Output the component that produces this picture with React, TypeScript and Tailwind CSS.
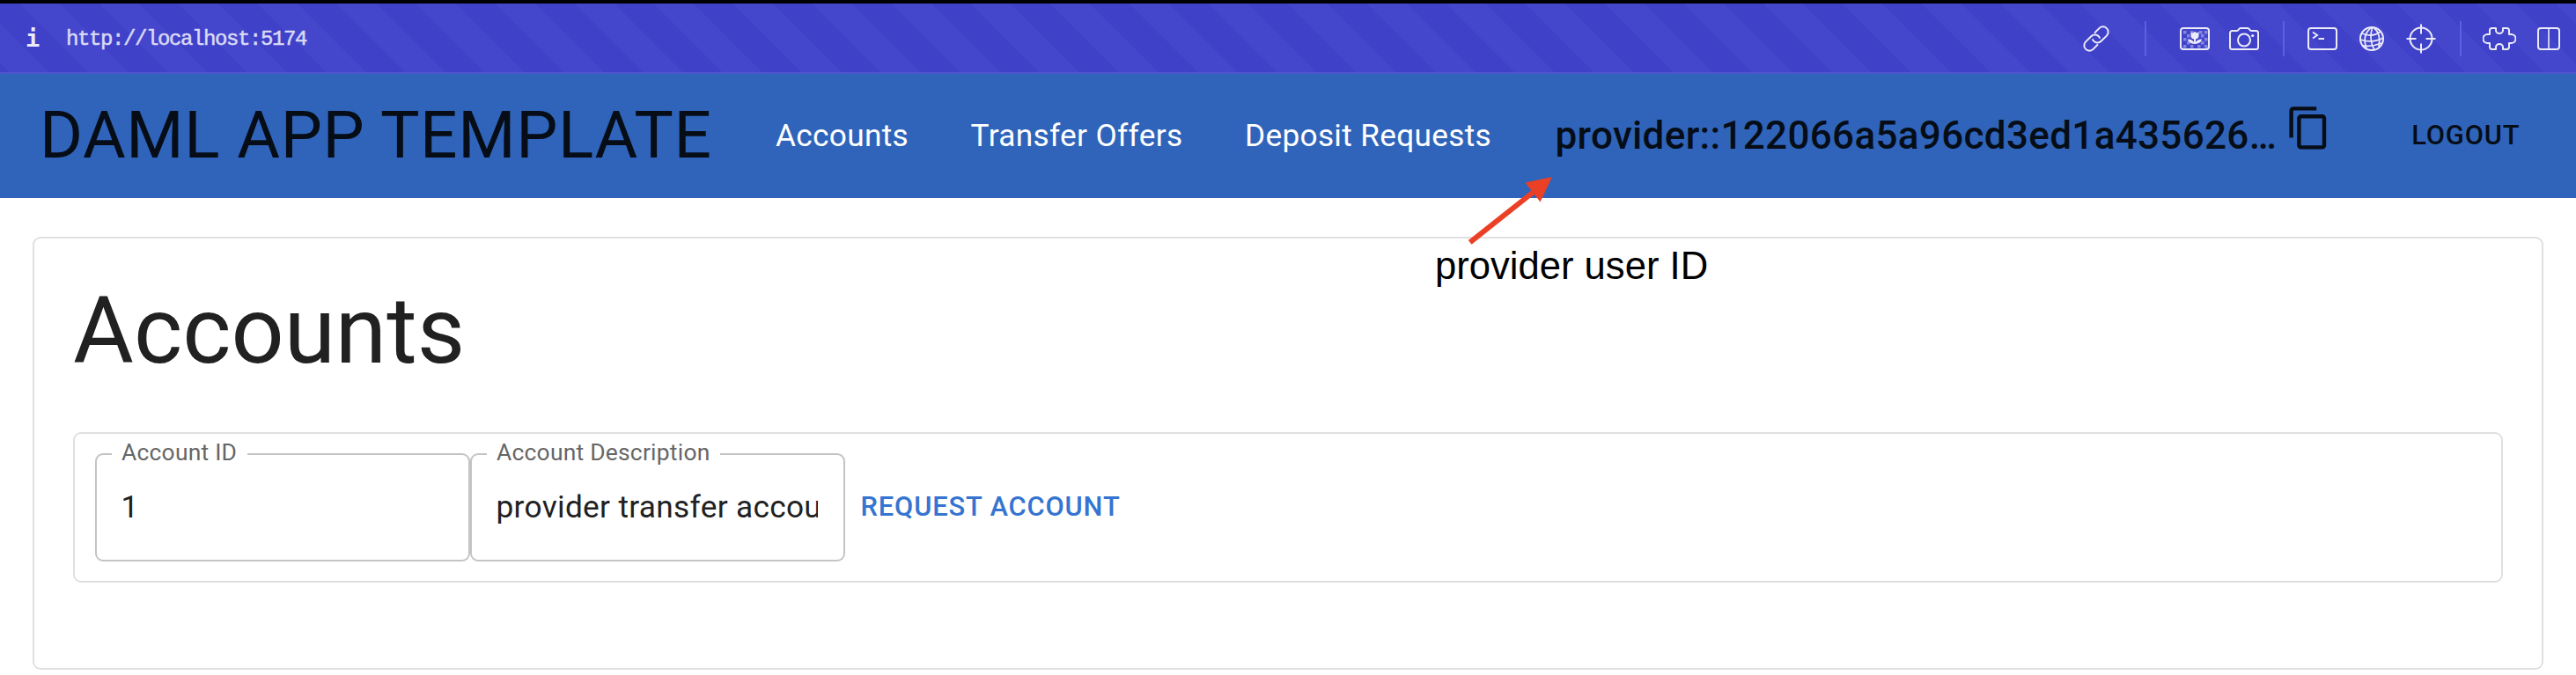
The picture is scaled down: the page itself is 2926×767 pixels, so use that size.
import React from "react";

type IconProps = { className?: string };

const strokeProps = { fill: "none", stroke: "#ebebfa", strokeWidth: 2 } as const;

function LinkIcon() {
  return (
    <svg className="h-[30px] w-[30px]" viewBox="-15 -15 30 30" {...strokeProps} strokeLinecap="round">
      <g transform="rotate(-45)">
        <path d="M-4 6H-10.800A6 6 0 0 1-10.800-6H-2A6 6 0 0 1 3.600 2" />
        <path d="M4-6H10.800A6 6 0 0 1 10.800 6H2A6 6 0 0 1-3.600-2" />
      </g>
    </svg>
  );
}

function ImageIcon() {
  const squares = [
    [4, 5], [12, 5], [22, 5], [28, 5],
    [8, 9], [24, 9],
    [4, 13], [28, 13],
    [8, 17], [24, 17],
    [4, 21], [12, 21], [20, 21], [28, 21],
  ];
  return (
    <svg className="h-[26px] w-[34px]" viewBox="0 0 34 26" {...strokeProps}>
      <g fill="#8587e0" stroke="none">
        {squares.map(([x, y]) => (
          <rect key={`${x}-${y}`} x={x} y={y - 1} width="3.500" height="3.500" />
        ))}
      </g>
      <path
        d="M12.500 5l2 1.500L17 5l2.500 1.500 2-1.500v4.500a4 4 0 0 1-3.500 4v3.500c1.200-2 3.500-3.400 7-3.400-.5 3.400-3.500 5.400-8 5.400s-7.500-2-8-5.400c3.500 0 5.800 1.400 7 3.400v-3.500a4 4 0 0 1-3.500-4z"
        fill="#ebebfa"
        stroke="#4346cb"
        strokeWidth="1"
        paintOrder="stroke"
      />
      <rect x="1" y="1" width="32" height="24" rx="3" />
    </svg>
  );
}

function CameraIcon() {
  return (
    <svg className="h-[26px] w-[34px]" viewBox="0 0 34 26" {...strokeProps}>
      <path d="M3.500 4H9c1.500 0 2-3 4-3h8c2 0 2.500 3 4 3h5.500A2.500 2.500 0 0 1 33 6.500v16a2.500 2.500 0 0 1-2.500 2.500h-27A2.500 2.500 0 0 1 1 22.500v-16A2.500 2.500 0 0 1 3.500 4z" />
      <circle cx="17" cy="14.500" r="7" />
      <circle cx="26.700" cy="9.500" r="1.600" fill="#ebebfa" stroke="none" />
    </svg>
  );
}

function TerminalIcon() {
  return (
    <svg className="h-[26px] w-[34px]" viewBox="0 0 34 26" {...strokeProps}>
      <rect x="1" y="1" width="32" height="24" rx="3" />
      <path d="M6 5.500l5 3.500-5 3.500M12.500 13h6.500" />
    </svg>
  );
}

function GlobeIcon() {
  return (
    <svg className="h-[28px] w-[28px]" viewBox="0 0 28 28" {...strokeProps}>
      <circle cx="14" cy="14" r="13" />
      <g strokeWidth="1.700">
        <path d="M14 1c-7 5-10 13-6 24M15 1c-3 7-3 17 2 26M16 1c6 5 8 12 6 22" />
        <path d="M3 8c7 3 14 3 21-2M1 15c9 3 17 3 26-2M4 22c7 1 14 0 21-3" />
      </g>
    </svg>
  );
}

function TargetIcon() {
  return (
    <svg className="h-[34px] w-[34px]" viewBox="0 0 34 34" {...strokeProps}>
      <circle cx="17" cy="17" r="12.500" />
      <path d="M17 .5v11M17 22.500v11M.5 17h11M22.500 17h11" />
    </svg>
  );
}

function PuzzleIcon() {
  return (
    <svg className="h-[28px] w-[38px]" viewBox="0 0 38 28" {...strokeProps} strokeLinejoin="round">
      <path d="M10.500 2H15v2.500a4 3.500 0 0 0 8 0V2h4.500q2.500 0 2.500 2.500V9h2.500a4.700 4.700 0 0 1 0 10H30v4q0 3-2.500 3H23v-2.500a4 3.500 0 0 0-8 0V26h-4.500Q8 26 8 23v-4H5.500a4.700 4.700 0 0 1 0-10H8V4.500Q8 2 10.500 2z" />
    </svg>
  );
}

function PanelIcon() {
  return (
    <svg className="h-[26px] w-[26px]" viewBox="0 0 26 26" {...strokeProps}>
      <rect x="1" y="1" width="24" height="24" rx="3" />
      <path d="M13 1v24" strokeWidth="1.600" />
    </svg>
  );
}

function CopyIcon({ className }: IconProps) {
  return (
    <svg className={className} viewBox="0 0 24 24" fill="#060d17">
      <path d="M16 1H4c-1.100 0-2 .9-2 2v14h2V3h12V1zm3 4H8c-1.100 0-2 .9-2 2v14c0 1.100.9 2 2 2h11c1.100 0 2-.9 2-2V7c0-1.100-.9-2-2-2zm0 16H8V7h11v14z" />
    </svg>
  );
}

function ToolbarDivider({ className = "" }: IconProps) {
  return <div className={`h-10 w-0.5 bg-[#5c5fe0] ${className}`} />;
}

function BrowserBar() {
  return (
    <header className="flex h-[84px] items-center border-t-4 border-b-2 border-t-black border-b-[#4f56cb] bg-[#3f41c8] bg-[linear-gradient(45deg,#4447cc_25%,transparent_25%,transparent_50%,#4447cc_50%,#4447cc_75%,transparent_75%)] bg-[length:90px_90px] bg-[position:23px_0px] pt-[2px] pr-[18px] font-['Liberation_Mono',monospace]">
      <span className="ml-[29px] w-[46px] font-['DejaVu_Sans_Mono',monospace] text-[27px] font-bold text-[#ebebfa]">
        i
      </span>
      <span className="pt-[2px] text-[24px] tracking-[-1.4px] text-[#d9d9f5] [-webkit-text-stroke:0.5px_#d9d9f5]">
        http://localhost:5174
      </span>
      <div className="ml-auto flex items-center">
        <LinkIcon />
        <ToolbarDivider className="ml-10" />
        <div className="ml-[38px] flex items-center gap-[22px]">
          <ImageIcon />
          <CameraIcon />
        </div>
        <ToolbarDivider className="ml-[27px]" />
        <div className="ml-[26px] flex items-center">
          <TerminalIcon />
          <div className="ml-[25px]"><GlobeIcon /></div>
          <div className="ml-[25px]"><TargetIcon /></div>
        </div>
        <ToolbarDivider className="ml-[27px]" />
        <div className="ml-[24px] flex items-center gap-[24px]">
          <PuzzleIcon />
          <PanelIcon />
        </div>
      </div>
    </header>
  );
}

function AppBar() {
  return (
    <nav className="flex h-[141px] items-center bg-[#2f64ba] pl-[45px] text-[#060d17]">
      <h2 className="w-[836px] pb-[1px] text-[74.8px] leading-none tracking-[0.0080em]">DAML APP TEMPLATE</h2>
      <div className="flex gap-[70.6px] text-[35.2px] tracking-[0.00938em] text-white">
        <a>Accounts</a>
        <a>Transfer Offers</a>
        <a>Deposit Requests</a>
      </div>
      <div className="ml-[72.500px] flex items-center">
        <span className="text-[44px] font-medium tracking-[0.0075em]">provider::122066a5a96cd3ed1a435626…</span>
        <CopyIcon className="mb-[18px] ml-[10px] h-[52.8px] w-[52.8px]" />
      </div>
      <button className="mr-[63.500px] ml-auto text-[30.8px] font-medium tracking-[0.02857em]">LOGOUT</button>
    </nav>
  );
}

function Field({ label, value }: { label: string; value: string }) {
  return (
    <fieldset className="h-[135px] w-[426px] min-w-0 rounded-[9px] border-2 border-[#c4c4c4] px-[17px]">
      <legend className="px-[11.500px] pb-[4px] text-[26.4px] leading-[22px] tracking-[0.00938em] text-[#666666]">
        {label}
      </legend>
      <div className="mr-[12px] ml-[11px] mt-[22px] overflow-hidden text-[35.2px] leading-[50px] tracking-[0.00938em] whitespace-nowrap">
        {value}
      </div>
    </fieldset>
  );
}

function Annotation() {
  return (
    <div className="absolute top-[196px] left-[1630px] font-['Liberation_Sans',sans-serif] text-black">
      <svg className="ml-[34px] h-[84px] w-[104px]" viewBox="0 0 104 84">
        <path d="M5.700 79.300L78 22" stroke="#eb4025" strokeWidth="6" />
        <path d="M99 5L68.500 11.500L85.500 33.500Z" fill="#eb4025" />
      </svg>
      <p className="text-[43.6px] leading-[44px] whitespace-nowrap">provider user ID</p>
    </div>
  );
}

export default function App() {
  return (
    <div className="relative h-[767px] w-[2926px] overflow-hidden bg-white font-['Roboto',sans-serif] text-[#212121]">
      <BrowserBar />
      <AppBar />
      <main className="mx-[37px] mt-[44px] h-[492px] rounded-[9px] border-2 border-[#e0e0e0] px-[44px] pt-[44px]">
        <h1 className="h-[176px] text-[105.6px] leading-[123px]">Accounts</h1>
        <section className="flex h-[171px] items-end rounded-[9px] border-2 border-[#e0e0e0] px-[22.500px] pb-[22px]">
          <Field label="Account ID" value="1" />
          <Field label="Account Description" value="provider transfer account" />
          <button className="mb-[39px] ml-[18px] text-[30.8px] font-medium tracking-[0.02857em] text-[#3574d0]">
            REQUEST ACCOUNT
          </button>
        </section>
      </main>
      <Annotation />
    </div>
  );
}
